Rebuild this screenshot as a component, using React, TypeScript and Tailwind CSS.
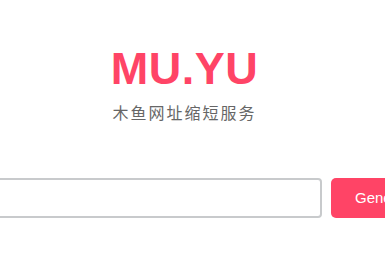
export default function App() {
  return (
    <div className="w-[385px] h-[280px] overflow-hidden bg-white" style={{ fontFamily: '"Liberation Sans", "Noto Sans CJK SC", sans-serif' }}>
      <div className="flex flex-col items-center pt-[42px] pr-[16px]">
        <h1 className="text-[45px] leading-[54px] font-bold text-[#ff4466] tracking-[0.5px]">MU.YU</h1>
        <p className="mt-[7px] text-[16px] leading-[22px] text-[#666] tracking-[2px]">木鱼网址缩短服务</p>
      </div>
      <div className="flex items-center gap-[9px] ml-[-20px] mt-[53px] w-[500px]">
        <input className="w-[342px] h-[40px] border-2 border-[#c8cacc] rounded-[4px] outline-none px-3 text-[14px]" />
        <button className="h-[40px] w-[110px] rounded-[5px] bg-[#ff4466] text-white text-[15px] text-left pl-[24px]">Generate</button>
      </div>
    </div>
  );
}
